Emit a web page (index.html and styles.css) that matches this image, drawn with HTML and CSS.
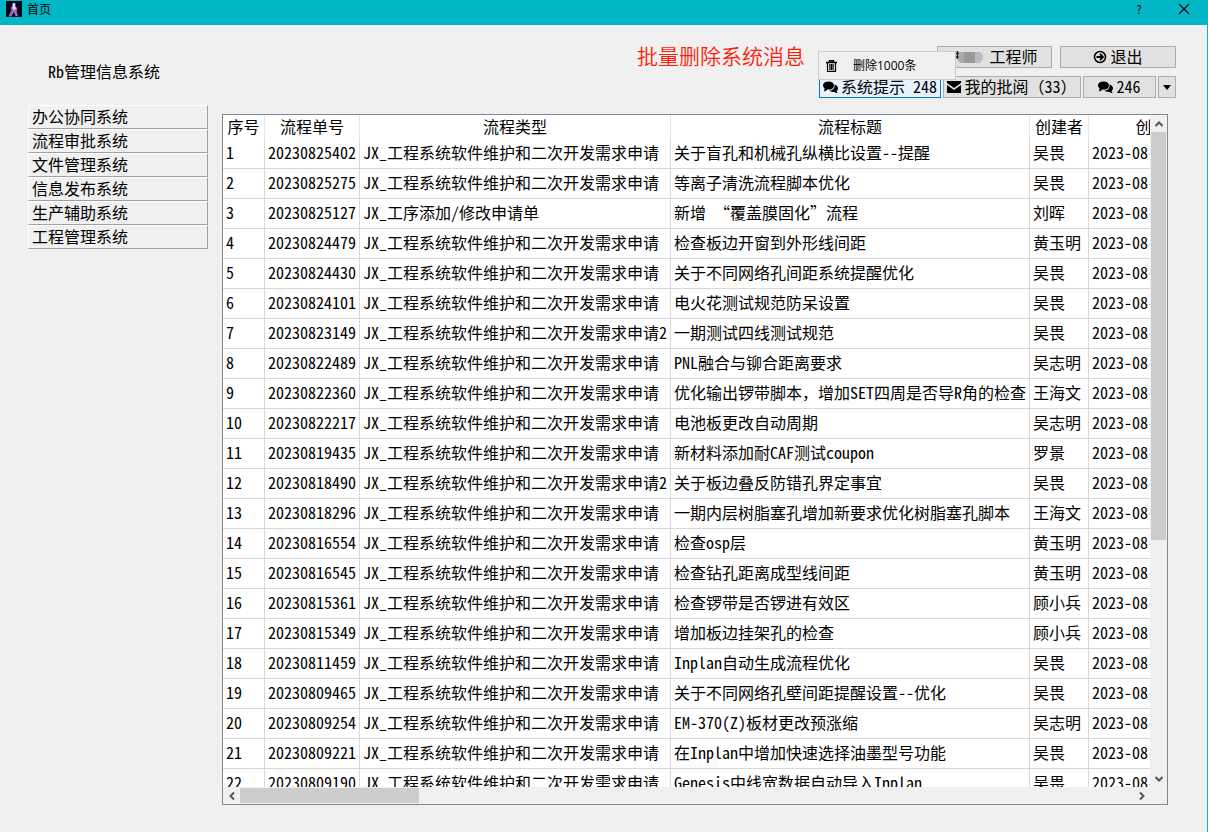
FILE: index.html
```html
<!DOCTYPE html>
<html lang="zh-CN">
<head>
<meta charset="utf-8">
<title>首页</title>
<link rel="stylesheet" href="styles.css">
</head>
<body>
<div class="window">
  <header class="titlebar">
    <svg class="app-icon" viewBox="0 0 16 16" aria-hidden="true"><rect width="16" height="16" fill="#08081c"/><path d="M6.500 2h3v3l2 3-1 2 1.500 5h-2.500L8 11l-3 4.500H2.500l3-6.500-1-2 2-2z" fill="#a06cc4"/><path d="M7 2.500h2v3l1 2-2 2-1.500-3z" fill="#f0d8f2"/></svg>
    <span class="window-title">首页</span>
    <button class="win-btn help" aria-label="帮助">?</button>
    <button class="win-btn" aria-label="关闭"><svg width="12" height="12" viewBox="0 0 12 12"><path d="M1 1l10 10M11 1L1 11" stroke="#000" stroke-width="1.100"/></svg></button>
  </header>
  <main class="content">
    <aside class="sidebar">
      <h1 class="system-name">Rb管理信息系统</h1>
      <nav class="nav">
        <button class="nav-item">办公协同系统</button>
        <button class="nav-item">流程审批系统</button>
        <button class="nav-item">文件管理系统</button>
        <button class="nav-item">信息发布系统</button>
        <button class="nav-item">生产辅助系统</button>
        <button class="nav-item">工程管理系统</button>
      </nav>
    </aside>
    <section class="workspace">
      <div class="toolbar">
        <p class="note">批量删除系统消息</p>
        <div class="actions">
          <div class="action-row account">
            <button class="btn user"><svg class="mask" width="34" height="16" viewBox="0 0 34 16" aria-hidden="true"><path d="M6.500 2v8M5 4.500h5M5 8h3" stroke="#222" stroke-width="1.500"/><path d="M8 4l3-1h13v11H10l-3-2z" fill="#aaa"/><rect x="13" y="3" width="11" height="11" fill="#999"/><path d="M24 3h5l3 3v4l-3 4h-5z" fill="#b8bbc0"/></svg><span>工程师</span></button>
            <button class="btn exit"><svg width="14" height="14" viewBox="0 0 14 14"><circle cx="7" cy="7" r="5.500" fill="none" stroke="#000" stroke-width="1.500"/><path d="M3.500 7h5M7 4l3 3-3 3" fill="none" stroke="#000" stroke-width="1.800"/></svg><span>退出</span></button>
          </div>
          <div class="action-row">
            <button class="btn tips active"><svg width="15" height="13" viewBox="0 0 15 13"><path d="M11.500 3.500c2 .6 3.500 2 3.500 3.800 0 1.200-.6 2.100-1.500 2.800.2.900.7 1.400 1.200 1.900-1.400 0-2.500-.5-3.300-1.100-2.100.3-4-.2-5.100-1.300 3.200-.1 5.800-2.200 5.200-6.100z"/><ellipse cx="5.500" cy="4.500" rx="5.500" ry="4.100"/><path d="M2 7L.8 10.300c1.500-.1 2.700-.8 3.500-1.900z"/></svg><span>系统提示 248</span></button>
            <button class="btn review"><svg width="14" height="12" viewBox="0 0 14 12"><path d="M0 0h14v2L7 7 0 2zM0 4l7 5 7-5v8H0z"/></svg><span>我的批阅（33）</span></button>
            <button class="btn chat"><svg width="15" height="13" viewBox="0 0 15 13"><path d="M11.500 3.500c2 .6 3.500 2 3.500 3.800 0 1.200-.6 2.100-1.500 2.800.2.900.7 1.400 1.200 1.900-1.400 0-2.500-.5-3.300-1.100-2.100.3-4-.2-5.100-1.300 3.200-.1 5.800-2.200 5.200-6.100z"/><ellipse cx="5.500" cy="4.500" rx="5.500" ry="4.100"/><path d="M2 7L.8 10.300c1.500-.1 2.700-.8 3.500-1.900z"/></svg><span>246</span></button>
            <button class="btn more" aria-label="更多"><svg width="8" height="5" viewBox="0 0 8 5"><path d="M0 0h8L4 5z"/></svg></button>
          </div>
          <div class="menu">
            <button class="menu-item"><svg width="11" height="12" viewBox="0 0 11 12"><path d="M0 2.500h11M3.500 2.500V.7h4v1.800" fill="none" stroke="#000" stroke-width="1.400"/><path d="M1.500 3v8.300h8V3M3.900 4v6M5.500 4v6M7.100 4v6" fill="none" stroke="#000" stroke-width="1.200"/></svg><span>删除1000条</span></button>
          </div>
        </div>
      </div>
      <div class="panel">
        <div class="viewport">
          <table class="grid">
            <colgroup><col class="c-no"><col class="c-id"><col class="c-type"><col class="c-title"><col class="c-author"><col class="c-date"></colgroup>
            <thead><tr><th>序号</th><th>流程单号</th><th>流程类型</th><th>流程标题</th><th>创建者</th><th>创建时间</th></tr></thead>
            <tbody>
              <tr><td>1</td><td>20230825402</td><td>JX_工程系统软件维护和二次开发需求申请</td><td>关于盲孔和机械孔纵横比设置--提醒</td><td>吴畏</td><td>2023-08-25</td></tr>
              <tr><td>2</td><td>20230825275</td><td>JX_工程系统软件维护和二次开发需求申请</td><td>等离子清洗流程脚本优化</td><td>吴畏</td><td>2023-08-25</td></tr>
              <tr><td>3</td><td>20230825127</td><td>JX_工序添加/修改申请单</td><td>新增 “覆盖膜固化”流程</td><td>刘晖</td><td>2023-08-25</td></tr>
              <tr><td>4</td><td>20230824479</td><td>JX_工程系统软件维护和二次开发需求申请</td><td>检查板边开窗到外形线间距</td><td>黄玉明</td><td>2023-08-24</td></tr>
              <tr><td>5</td><td>20230824430</td><td>JX_工程系统软件维护和二次开发需求申请</td><td>关于不同网络孔间距系统提醒优化</td><td>吴畏</td><td>2023-08-24</td></tr>
              <tr><td>6</td><td>20230824101</td><td>JX_工程系统软件维护和二次开发需求申请</td><td>电火花测试规范防呆设置</td><td>吴畏</td><td>2023-08-24</td></tr>
              <tr><td>7</td><td>20230823149</td><td>JX_工程系统软件维护和二次开发需求申请2</td><td>一期测试四线测试规范</td><td>吴畏</td><td>2023-08-23</td></tr>
              <tr><td>8</td><td>20230822489</td><td>JX_工程系统软件维护和二次开发需求申请</td><td>PNL融合与铆合距离要求</td><td>吴志明</td><td>2023-08-22</td></tr>
              <tr><td>9</td><td>20230822360</td><td>JX_工程系统软件维护和二次开发需求申请</td><td>优化输出锣带脚本，增加SET四周是否导R角的检查</td><td>王海文</td><td>2023-08-22</td></tr>
              <tr><td>10</td><td>20230822217</td><td>JX_工程系统软件维护和二次开发需求申请</td><td>电池板更改自动周期</td><td>吴志明</td><td>2023-08-22</td></tr>
              <tr><td>11</td><td>20230819435</td><td>JX_工程系统软件维护和二次开发需求申请</td><td>新材料添加耐CAF测试coupon</td><td>罗景</td><td>2023-08-19</td></tr>
              <tr><td>12</td><td>20230818490</td><td>JX_工程系统软件维护和二次开发需求申请2</td><td>关于板边叠反防错孔界定事宜</td><td>吴畏</td><td>2023-08-18</td></tr>
              <tr><td>13</td><td>20230818296</td><td>JX_工程系统软件维护和二次开发需求申请</td><td>一期内层树脂塞孔增加新要求优化树脂塞孔脚本</td><td>王海文</td><td>2023-08-18</td></tr>
              <tr><td>14</td><td>20230816554</td><td>JX_工程系统软件维护和二次开发需求申请</td><td>检查osp层</td><td>黄玉明</td><td>2023-08-16</td></tr>
              <tr><td>15</td><td>20230816545</td><td>JX_工程系统软件维护和二次开发需求申请</td><td>检查钻孔距离成型线间距</td><td>黄玉明</td><td>2023-08-16</td></tr>
              <tr><td>16</td><td>20230815361</td><td>JX_工程系统软件维护和二次开发需求申请</td><td>检查锣带是否锣进有效区</td><td>顾小兵</td><td>2023-08-15</td></tr>
              <tr><td>17</td><td>20230815349</td><td>JX_工程系统软件维护和二次开发需求申请</td><td>增加板边挂架孔的检查</td><td>顾小兵</td><td>2023-08-15</td></tr>
              <tr><td>18</td><td>20230811459</td><td>JX_工程系统软件维护和二次开发需求申请</td><td>Inplan自动生成流程优化</td><td>吴畏</td><td>2023-08-11</td></tr>
              <tr><td>19</td><td>20230809465</td><td>JX_工程系统软件维护和二次开发需求申请</td><td>关于不同网络孔壁间距提醒设置--优化</td><td>吴畏</td><td>2023-08-09</td></tr>
              <tr><td>20</td><td>20230809254</td><td>JX_工程系统软件维护和二次开发需求申请</td><td>EM-370(Z)板材更改预涨缩</td><td>吴志明</td><td>2023-08-09</td></tr>
              <tr><td>21</td><td>20230809221</td><td>JX_工程系统软件维护和二次开发需求申请</td><td>在Inplan中增加快速选择油墨型号功能</td><td>吴畏</td><td>2023-08-09</td></tr>
              <tr><td>22</td><td>20230809190</td><td>JX_工程系统软件维护和二次开发需求申请</td><td>Genesis中线宽数据自动导入Inplan</td><td>吴畏</td><td>2023-08-09</td></tr>
            </tbody>
          </table>
        </div>
        <div class="scroll vertical">
          <button class="arrow" aria-label="向上"><svg width="8" height="6" viewBox="0 0 8 6"><path d="M.5 5L4 1.500 7.500 5"/></svg></button>
          <div class="track"><div class="thumb"></div></div>
          <button class="arrow" aria-label="向下"><svg width="8" height="6" viewBox="0 0 8 6"><path d="M.5 1L4 4.500 7.500 1"/></svg></button>
        </div>
        <div class="scroll horizontal">
          <button class="arrow" aria-label="向左"><svg width="6" height="8" viewBox="0 0 6 8"><path d="M5 .5L1.500 4 5 7.500"/></svg></button>
          <div class="track"><div class="thumb"></div></div>
          <button class="arrow" aria-label="向右"><svg width="6" height="8" viewBox="0 0 6 8"><path d="M1 .5L4.500 4 1 7.500"/></svg></button>
        </div>
      </div>
    </section>
  </main>
</div>
</body>
</html>
```
FILE: styles.css
```css
* { box-sizing: border-box; }
body {
  margin: 0;
  background: #f0f0f0;
  color: #000;
  font: 16px/22px "Noto Sans Mono CJK SC", "Noto Sans CJK SC", sans-serif;
}
button {
  margin: 0;
  padding: 0;
  border: 0;
  background: none;
  color: inherit;
  font: inherit;
}
svg { display: block; flex: none; }
.window {
  display: flex;
  flex-direction: column;
  height: 100vh;
  border-right: 1px solid #00b7c3;
}
.titlebar {
  display: flex;
  align-items: center;
  height: 25px;
  padding: 0 10px 7px 6px;
  background: #02b7c5;
  font-size: 12px;
  line-height: 18px;
}
.app-icon { width: 16px; height: 16px; }
.window-title { flex: 1; margin-left: 5px; }
.win-btn {
  display: flex;
  align-items: center;
  justify-content: center;
  width: 26px;
  height: 18px;
  margin-left: 19px;
}
.content {
  flex: 1;
  min-height: 0;
  display: grid;
  grid-template-columns: 180px minmax(0, 1fr);
  grid-template-rows: minmax(0, 1fr);
  gap: 14px;
  padding: 21px 31px 27px 28px;
}
.system-name {
  margin: 0;
  padding: 14px 0 23px 20px;
  font-size: 16px;
  font-weight: 400;
  line-height: 22px;
}
.nav { display: flex; flex-direction: column; }
.nav-item {
  height: 24px;
  padding: 0 0 2px 3px;
  border: 1px solid;
  border-color: #fff #a0a0a0 #a0a0a0 #fff;
  line-height: 20px;
  text-align: left;
}
.workspace { display: flex; flex-direction: column; gap: 16px; min-height: 0; }
.toolbar { display: flex; justify-content: flex-end; gap: 14px; }
.note {
  margin: 0;
  color: #ff1a0a;
  font: 350 21px/18px "Noto Sans CJK SC", sans-serif;
}
.actions { position: relative; display: flex; flex-direction: column; gap: 8px; }
.action-row { display: flex; justify-content: flex-end; gap: 2px; }
.account { gap: 8px; }
.btn {
  display: flex;
  align-items: center;
  justify-content: center;
  gap: 3px;
  height: 22px;
  border: 1px solid #adadad;
  background: #e1e1e1;
  line-height: 20px;
  white-space: nowrap;
}
.btn span { padding-bottom: 2px; }
.btn.active { border-color: #0078d7; background: #e5f1fb; }
.user { width: 115px; gap: 4px; }
.exit { width: 116px; }
.tips { width: 122px; }
.review { width: 138px; }
.chat { width: 73px; }
.more { width: 18px; }
.menu {
  position: absolute;
  top: 5px;
  left: -1px;
  width: 138px;
  padding: 1px;
  border: 1px solid #ccc;
  background: #f0f0f0;
}
.menu-item {
  display: flex;
  align-items: center;
  gap: 16px;
  width: 100%;
  height: 25px;
  padding-left: 6px;
  font: 12px/18px "Open Sans", "Noto Sans CJK SC", sans-serif;
}
.panel {
  flex: 1;
  min-height: 0;
  display: grid;
  grid-template-columns: minmax(0, 1fr) 17px;
  grid-template-rows: minmax(0, 1fr) 17px;
  margin-right: 8px;
  border: 1px solid #828790;
}
.viewport { overflow: auto; scrollbar-width: none; background: #fff; }
.grid { width: 1024px; table-layout: fixed; border-collapse: separate; border-spacing: 0; }
.c-no { width: 42px; }
.c-id { width: 95px; }
.c-type { width: 311px; }
.c-title { width: 359px; }
.c-author { width: 59px; }
.grid th, .grid td {
  padding: 0 0 3px 3px;
  border-right: 1px solid #d8d8d8;
  white-space: nowrap;
  font-weight: 400;
}
.grid th { height: 24px; padding: 0 0 2px; border-color: #e5e5e5; text-align: center; }
.grid td { height: 30px; border-bottom: 1px solid #d8d8d8; }
.scroll { display: flex; background: #f0f0f0; }
.vertical { flex-direction: column; padding-left: 1px; }
.horizontal { padding-top: 1px; }
.track { flex: 1; }
.thumb { background: #cdcdcd; }
.vertical .thumb { width: 15px; height: 64%; }
.horizontal .thumb { width: 20%; height: 15px; }
.arrow { display: flex; align-items: center; justify-content: center; width: 17px; height: 17px; }
.vertical .arrow { width: 15px; }
.horizontal .arrow { height: 15px; }
.arrow path { fill: none; stroke: #555; stroke-width: 2; }
```
